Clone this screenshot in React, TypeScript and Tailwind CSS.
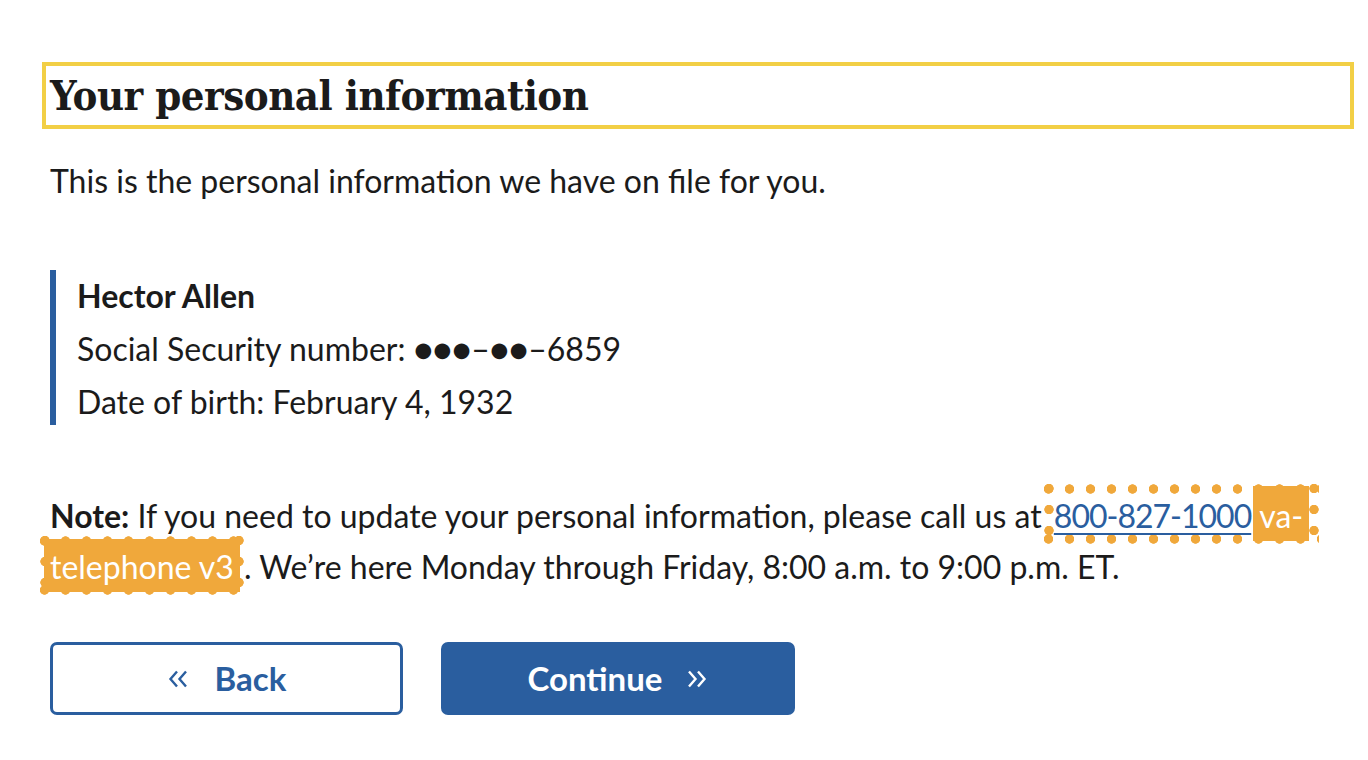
import React from "react";

const Chevrons = ({ dir, className }: { dir: "left" | "right"; className?: string }) => (
  <svg viewBox="0 0 22 20" className={className} fill="none" stroke="currentColor" strokeWidth={2.4} strokeLinecap="butt" strokeLinejoin="miter">
    {dir === "left" ? (
      <path d="M10 2.5 L3.5 10 L10 17.5 M19 2.5 L12.5 10 L19 17.5" />
    ) : (
      <path d="M3 2.5 L9.5 10 L3 17.5 M12 2.5 L18.5 10 L12 17.5" />
    )}
  </svg>
);

const dots =
  "[background-image:radial-gradient(circle,#f0a83b_4.4px,transparent_5px),radial-gradient(circle,#f0a83b_4.4px,transparent_5px),radial-gradient(circle,#f0a83b_4.4px,transparent_5px),radial-gradient(circle,#f0a83b_4.4px,transparent_5px)] [background-size:21px_10px,21px_10px,10px_21px,10px_21px] [background-position:-6px_0,-6px_100%,0_-6px,100%_-6px] [background-repeat:repeat-x,repeat-x,repeat-y,repeat-y]";

export default function App() {
  return (
    <div className="min-h-[760px] w-[1368px] overflow-hidden bg-white text-[#1b1b1b] [font-family:Lato,'Noto_Sans',sans-serif]">
      <div className="ml-[50px] w-[1296px] pt-[70px]">
        <h3 className="h-[51px] text-[41.5px] font-bold leading-[51px] outline-4 outline-offset-4 outline-solid outline-[#f2cf45] [font-family:'DejaVu_Serif_Condensed','DejaVu_Serif',serif] tracking-[-0.5px]">
          Your personal information
        </h3>
        <p className="mt-[34px] text-[32px] leading-[51px]">
          This is the personal information we have on file for you.
        </p>
        <div className="mt-[64px] h-[155px] border-l-[6px] border-[#2a5e9f] pl-[21px] text-[32px]">
          <div className="leading-[52px] font-bold">Hector Allen</div>
          <div className="leading-[53px]">Social Security number: ●●●–●●–6859</div>
          <div className="leading-[53px]">Date of birth: February 4, 1932</div>
        </div>
        <p className="mt-[65px] text-[32px] leading-[51px]">
          <strong className="font-bold">Note:</strong> If you need to update your personal information, please call us at{" "}
          <span className={`ml-[-6px] pl-[10px] pr-[10px] pt-[12px] pb-[9px] ${dots}`}>
            <a href="#" className="tracking-[-1px] text-[#2a5e9f] underline decoration-2 underline-offset-[5px]">800-827-1000</a>
            <span className="ml-[2px] bg-[#f0a83b] px-[6px] pt-[10px] pb-[6px] text-white">va-</span>
          </span>
          <br />
          <span className={`ml-[-10px] px-[4px] pt-[11px] pb-[9px] ${dots}`}>
            <span className="bg-[#f0a83b] px-[6px] pt-[8px] pb-[6px] text-white">telephone v3</span>
          </span>
          . We’re here Monday through Friday, 8:00 a.m. to 9:00 p.m. ET.
        </p>
        <div className="mt-[50px] flex gap-[38px]">
          <button className="flex h-[73px] w-[353px] items-center justify-center gap-[26px] rounded-[7px] border-[3px] border-[#2a5e9f] bg-white text-[33px] font-bold text-[#2a5e9f]">
            <Chevrons dir="left" className="h-[20px] w-[22px]" />
            <span>Back</span>
          </button>
          <button className="flex h-[73px] w-[354px] items-center justify-center gap-[24px] rounded-[7px] bg-[#2a5e9f] text-[33px] font-bold text-white">
            <span>Continue</span>
            <Chevrons dir="right" className="h-[20px] w-[22px]" />
          </button>
        </div>
      </div>
    </div>
  );
}
